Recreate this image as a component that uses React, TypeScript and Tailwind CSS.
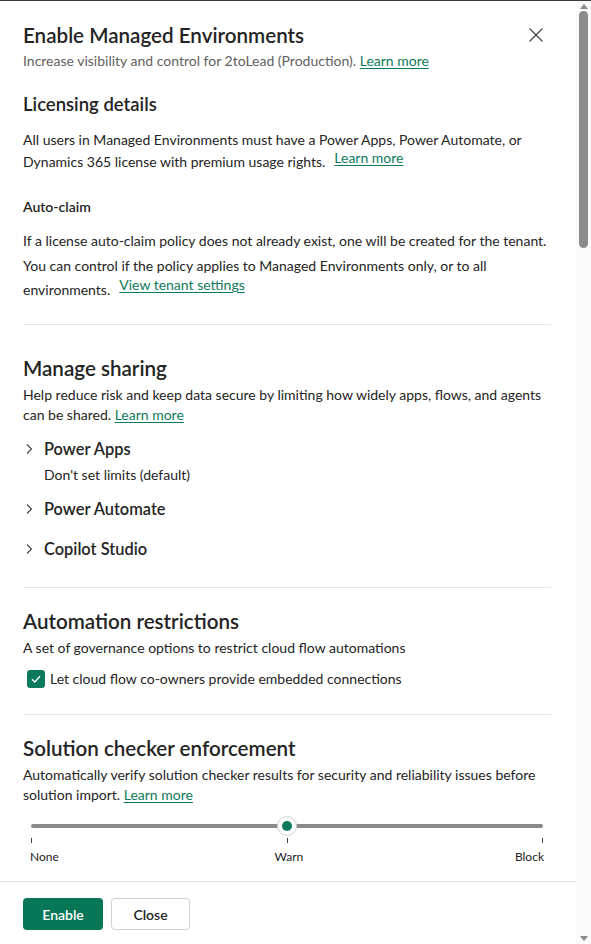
import { X } from "lucide-react";

const linkCls = "text-[#0e7a5d] underline underline-offset-2 decoration-1";

function Chevron() {
  return (
    <svg width="8" height="12" viewBox="0 0 8 12" className="shrink-0 text-[#424242]">
      <path d="M2 1.5 6.5 6 2 10.5" fill="none" stroke="currentColor" strokeWidth="1.1" />
    </svg>
  );
}

function ShareItem({ title, sub }: { title: string; sub?: string }) {
  return (
    <div>
      <div className="flex h-[40px] items-center">
        <div className="flex w-[21px] pl-[2px]">
          <Chevron />
        </div>
        <span className="text-[16.4px] font-semibold leading-[22px]">{title}</span>
      </div>
      {sub && <p className="-mt-[4px] mb-[4px] pl-[21px] text-[14px] leading-[20px]">{sub}</p>}
    </div>
  );
}

function Scrollbar() {
  return (
    <div className="flex w-[15px] shrink-0 flex-col items-center bg-[#f9f9f9]">
      <div className="mt-[3px] h-0 w-0 border-x-[4px] border-b-[5px] border-x-transparent border-b-[#8a8a8a]" />
      <div className="mt-[2px] h-[237px] w-[9px] rounded-full bg-[#8a8a8a]" />
      <div className="flex-1" />
      <div className="mb-[3px] h-0 w-0 border-x-[4px] border-t-[5px] border-x-transparent border-t-[#8a8a8a]" />
    </div>
  );
}

export default function App() {
  return (
    <div className="flex h-[944px] w-[591px] flex-col overflow-hidden bg-white font-['Segoe_UI',Lato,sans-serif] text-[#242424]">
      <div className="h-px shrink-0 bg-[#3b3b3b]" />
      <div className="flex min-h-0 flex-1">
        <div className="flex min-w-0 flex-1 flex-col">
          <div className="min-h-0 flex-1 overflow-hidden pl-[23px] pr-[25px] pt-[20px]">
            {/* header */}
            <div className="flex items-start justify-between">
              <h1 className="text-[20.6px] font-semibold leading-[28px]">Enable Managed Environments</h1>
              <button className="mr-[3px] mt-[2px] text-[#424242]">
                <X size={24} strokeWidth={1.2} />
              </button>
            </div>
            <p className="mt-[2px] text-[14px] leading-[20px] text-[#616161]">
              Increase visibility and control for 2toLead (Production).{" "}
              <a href="#" className={linkCls}>Learn more</a>
            </p>

            {/* licensing */}
            <h2 className="mt-[21px] text-[18.5px] font-semibold leading-[24px]">Licensing details</h2>
            <p className="mt-[13px] text-[14px] leading-[22px]">
              All users in Managed Environments must have a Power Apps, Power Automate, or
              <br />
              Dynamics 365 license with premium usage rights.
              <a href="#" className={`${linkCls} relative -top-[4px] ml-[9px]`}>Learn more</a>
            </p>
            <h3 className="mt-[24px] text-[14px] font-semibold leading-[20px]">Auto-claim</h3>
            <p className="mt-[12px] text-[14px] leading-[24.5px]">
              <span className="whitespace-nowrap">If a license auto-claim policy does not already exist, one will be created for the tenant.</span>
              <br />
              You can control if the policy applies to Managed Environments only, or to all
              <br />
              environments.
              <a href="#" className={`${linkCls} relative -top-[5px] ml-[9px]`}>View tenant settings</a>
            </p>
            <div className="mt-[21px] h-px bg-[#e6e6e6]" />

            {/* manage sharing */}
            <h2 className="mt-[29px] text-[20.6px] font-semibold leading-[28px]">Manage sharing</h2>
            <p className="mt-[3px] text-[14px] leading-[20px]">
              <span className="whitespace-nowrap">Help reduce risk and keep data secure by limiting how widely apps, flows, and agents</span>
              <br />
              can be shared. <a href="#" className={linkCls}>Learn more</a>
            </p>
            <div className="mt-[4px]">
              <ShareItem title="Power Apps" sub="Don't set limits (default)" />
              <ShareItem title="Power Automate" />
              <ShareItem title="Copilot Studio" />
            </div>
            <div className="mt-[18px] h-px bg-[#e6e6e6]" />

            {/* automation */}
            <h2 className="mt-[19px] text-[20.6px] font-semibold leading-[28px]">Automation restrictions</h2>
            <p className="mt-[3px] text-[14px] leading-[20px]">
              A set of governance options to restrict cloud flow automations
            </p>
            <label className="mt-[11px] flex h-[20px] items-center gap-[5px] pl-[4px] text-[14px]">
              <span className="flex h-[18px] w-[18px] items-center justify-center rounded-[3px] bg-[#0b7a5c]">
                <svg width="12" height="12" viewBox="0 0 12 12">
                  <path d="M2 6.3 4.8 9 10 3.2" fill="none" stroke="white" strokeWidth="1.3" />
                </svg>
              </span>
              <span className="leading-[20px]">Let cloud flow co-owners provide embedded connections</span>
            </label>
            <div className="mt-[25px] h-px bg-[#e6e6e6]" />

            {/* solution checker */}
            <h2 className="mt-[19px] text-[20.6px] font-semibold leading-[28px]">Solution checker enforcement</h2>
            <p className="mt-[3px] text-[14px] leading-[20px]">
              <span className="whitespace-nowrap">Automatically verify solution checker results for security and reliability issues before</span>
              <br />
              solution import. <a href="#" className={linkCls}>Learn more</a>
            </p>
            <div className="relative mx-[8px] mt-[11px] h-[20px]">
              <div className="absolute left-0 right-0 top-[8px] h-[4px] rounded-full bg-[#8a8a8a]" />
              <div className="absolute left-1/2 top-0 flex h-[20px] w-[20px] -translate-x-1/2 items-center justify-center rounded-full border border-[#c9d6d1] bg-white">
                <div className="h-[10px] w-[10px] rounded-full bg-[#0b7a5c]" />
              </div>
            </div>
            <div className="relative mx-[8px] mt-[2px] h-[5px]">
              <div className="absolute left-0 top-0 h-[5px] w-px bg-[#424242]" />
              <div className="absolute left-1/2 top-0 h-[5px] w-px bg-[#424242]" />
              <div className="absolute right-0 top-0 h-[5px] w-px bg-[#424242]" />
            </div>
            <div className="mx-[8px] mt-[6px] flex justify-between text-[12px] leading-[16px]">
              <span className="-ml-[1px]">None</span>
              <span className="translate-x-[2px]">Warn</span>
              <span className="-mr-[1px]">Block</span>
            </div>
          </div>

          {/* footer */}
          <footer className="flex h-[63px] shrink-0 items-start gap-[8px] border-t border-[#e0e0e0] pl-[23px] pt-[16px]">
            <button className="h-[32px] w-[80px] rounded-[4px] bg-[#077757] text-[14px] font-semibold text-white">
              Enable
            </button>
            <button className="h-[32px] w-[79px] rounded-[4px] border border-[#d1d1d1] bg-white text-[14px] font-semibold text-[#242424]">
              Close
            </button>
          </footer>
        </div>
        <Scrollbar />
      </div>
    </div>
  );
}
